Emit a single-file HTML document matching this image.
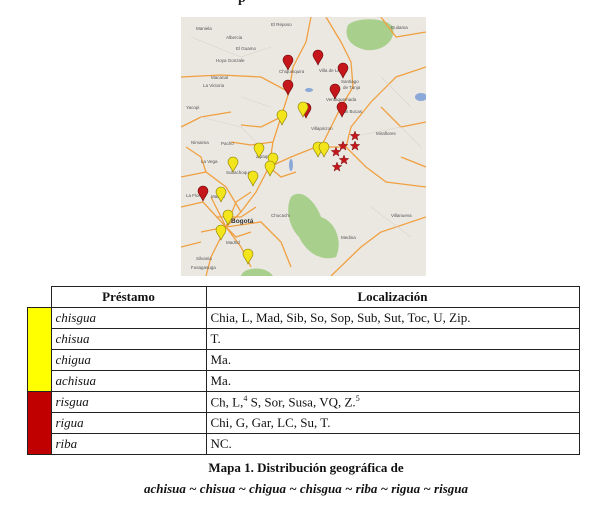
<!DOCTYPE html>
<html><head><meta charset="utf-8"><style>
body{margin:0;width:612px;height:512px;background:#fff;position:relative;overflow:hidden;font-family:"Liberation Serif",serif;}
#map{position:absolute;left:181px;top:17px;width:245px;height:259px;}
table{position:absolute;left:27px;top:286px;border-collapse:collapse;font-size:13px;color:#111;}
td,th{border:1px solid #222;height:20px;padding:0 0 0 4px;text-align:left;}
th{text-align:center;font-weight:bold;padding:0;}
td.i{font-style:italic;}
.cap{position:absolute;left:0;width:612px;text-align:center;font-size:13px;font-weight:bold;color:#111;}
</style></head><body>
<div style="position:absolute;left:238px;top:-9px;font-size:14px;font-weight:bold;color:#222;">p</div>
<svg id="map" viewBox="0 0 245 259">
<defs>
<g id="ry"><path d="M0,9 C-2,4 -5,2 -5,-1 A5,5 0 1 1 5,-1 C5,2 2,4 0,9Z" fill="#f2e51c" stroke="#8a7d00" stroke-width="0.6"/></g>
<g id="rr"><path d="M0,9 C-2,4 -5,2 -5,-1 A5,5 0 1 1 5,-1 C5,2 2,4 0,9Z" fill="#c5161b" stroke="#6a0a0a" stroke-width="0.6"/></g>
<polygon id="st" points="0,-5 1.3,-1.6 4.8,-1.5 2,0.7 3,4.1 0,2.1 -3,4.1 -2,0.7 -4.8,-1.5 -1.3,-1.6" fill="#c5161b" stroke="#6a0a0a" stroke-width="0.4"/>
</defs>
<rect width="245" height="259" fill="#ebe8e2"/>
<path d="M167,8 C175,0 205,0 212,10 C215,25 200,35 185,33 C170,30 162,20 167,8Z" fill="#a8cf8c"/>
<path d="M110,180 C120,170 135,185 140,200 C155,205 162,225 155,240 C140,245 125,235 118,220 C108,210 104,192 110,180Z" fill="#a8cf8c"/>
<path d="M60,259 C62,250 85,248 92,259Z" fill="#a8cf8c"/>
<g fill="none" stroke="#f0a040" stroke-width="1.3">
<path d="M130,0 L125,25 L112,50 L108,75 L100,100 L92,125 L88,150 L75,175 L60,195 L45,210"/>
<path d="M145,0 L160,25 L170,45 L172,70 L160,90 L150,110 L140,130"/>
<path d="M0,60 L40,58 L80,60 L108,75"/>
<path d="M88,150 L110,140 L135,130 L165,130 L185,150 L205,165 L245,170"/>
<path d="M0,160 L25,155 L45,170 L60,195"/>
<path d="M0,190 L22,185 L45,210 L60,230 L70,250"/>
<path d="M45,210 L30,240 L25,259"/>
<path d="M45,210 L80,205 L100,225 L110,250"/>
<path d="M165,130 L170,110 L190,85 L215,60 L245,50"/>
<path d="M200,0 L215,20 L245,15"/>
<path d="M150,259 L180,230 L200,215 L245,200"/>
<path d="M0,230 L20,225"/>
<path d="M30,180 L45,210 L55,185 L70,175 M35,200 L60,200 L75,190 M45,210 L55,220 L70,215 M20,215 L45,210"/>
<path d="M100,100 L80,110 L60,108 M92,125 L70,128 L50,125 M88,150 L100,160 L115,155"/>
<path d="M5,130 L20,140 L25,155 M0,110 L20,100 L50,95"/>
<path d="M200,90 L220,110 L245,105 M220,140 L245,150"/>
</g>
<g fill="none" stroke="#d8d4cc" stroke-width="0.6">
<path d="M10,20 L60,40 L90,30 M20,100 L60,110 L80,130 M170,120 L220,110 L240,130 M200,60 L230,90 M190,190 L230,220 M60,80 L90,90"/>
</g>
<g fill="#8aa8d8"><ellipse cx="240" cy="80" rx="6" ry="4"/><ellipse cx="128" cy="73" rx="4" ry="2"/><ellipse cx="110" cy="148" rx="2" ry="6"/></g>
<g font-family="Liberation Sans,sans-serif" font-size="4.5" fill="#555">
<text x="15" y="13">Maniela</text><text x="90" y="9">El Reposo</text><text x="45" y="22">Albercia</text><text x="55" y="33">El Guamo</text>
<text x="35" y="45">Hoya Gonzale</text><text x="98" y="56">Chiquinquira</text><text x="138" y="55">Villa de Leyva</text>
<text x="160" y="66">Santiago</text><text x="162" y="72">de Tunja</text><text x="210" y="12">Duitama</text>
<text x="30" y="62">Macanal</text><text x="22" y="70">La Victoria</text><text x="5" y="92">Yacopi</text>
<text x="145" y="84">Ventaquemada</text><text x="160" y="96">Las Bocas</text><text x="130" y="113">Villapinzon</text>
<text x="10" y="127">Nimaima</text><text x="40" y="128">Pacho</text><text x="195" y="118">Miraflores</text>
<text x="75" y="141">Zipaquira</text><text x="20" y="146">La Vega</text><text x="45" y="157">Subachoque</text>
<text x="5" y="180">La Florida</text><text x="30" y="181">Madrid</text><text x="50" y="206" font-weight="bold" font-size="6.5" fill="#333">Bogotá</text>
<text x="90" y="200">Chocachi</text><text x="160" y="222">Medina</text><text x="45" y="227">Madrid</text>
<text x="15" y="243">Silvania</text><text x="10" y="252">Fusagasuga</text><text x="210" y="200">Villanueva</text>
</g>
<use href="#rr" x="107" y="44"/><use href="#rr" x="137" y="39"/><use href="#rr" x="162" y="52"/><use href="#rr" x="107" y="69"/>
<use href="#rr" x="154" y="73"/><use href="#rr" x="125" y="92"/><use href="#rr" x="161" y="91"/><use href="#rr" x="22" y="175"/>
<use href="#ry" x="122" y="91"/><use href="#ry" x="101" y="99"/><use href="#ry" x="78" y="132"/><use href="#ry" x="92" y="142"/>
<use href="#ry" x="89" y="150"/><use href="#ry" x="52" y="146"/><use href="#ry" x="72" y="160"/><use href="#ry" x="40" y="176"/>
<use href="#ry" x="47" y="199"/><use href="#ry" x="40" y="214"/><use href="#ry" x="67" y="238"/>
<use href="#ry" x="137" y="131"/><use href="#ry" x="143" y="131"/>
<use href="#st" x="174" y="119"/><use href="#st" x="162" y="129"/><use href="#st" x="174" y="129"/>
<use href="#st" x="155" y="135"/><use href="#st" x="163" y="143"/><use href="#st" x="156" y="150"/>
</svg>
<table>
<tr><th style="width:23px;border-left:none;border-top:none;"></th><th style="width:154px">Préstamo</th><th style="width:372px">Localización</th></tr>
<tr><td rowspan="4" style="background:#ffff00;padding:0"></td><td class="i">chisgua</td><td>Chia, L, Mad, Sib, So, Sop, Sub, Sut, Toc, U, Zip.</td></tr>
<tr><td class="i">chisua</td><td>T.</td></tr>
<tr><td class="i">chigua</td><td>Ma.</td></tr>
<tr><td class="i">achisua</td><td>Ma.</td></tr>
<tr><td rowspan="3" style="background:#c00000;padding:0"></td><td class="i">risgua</td><td>Ch, L,<sup style="font-size:8px">4</sup> S, Sor, Susa, VQ, Z.<sup style="font-size:8px">5</sup></td></tr>
<tr><td class="i">rigua</td><td>Chi, G, Gar, LC, Su, T.</td></tr>
<tr><td class="i">riba</td><td>NC.</td></tr>
</table>
<div class="cap" style="top:460px;">Mapa 1. Distribución geográfica de</div>
<div class="cap" style="top:481px;font-style:italic;">achisua ~ chisua ~ chigua ~ chisgua ~ riba ~ rigua ~ risgua</div>
</body></html>
